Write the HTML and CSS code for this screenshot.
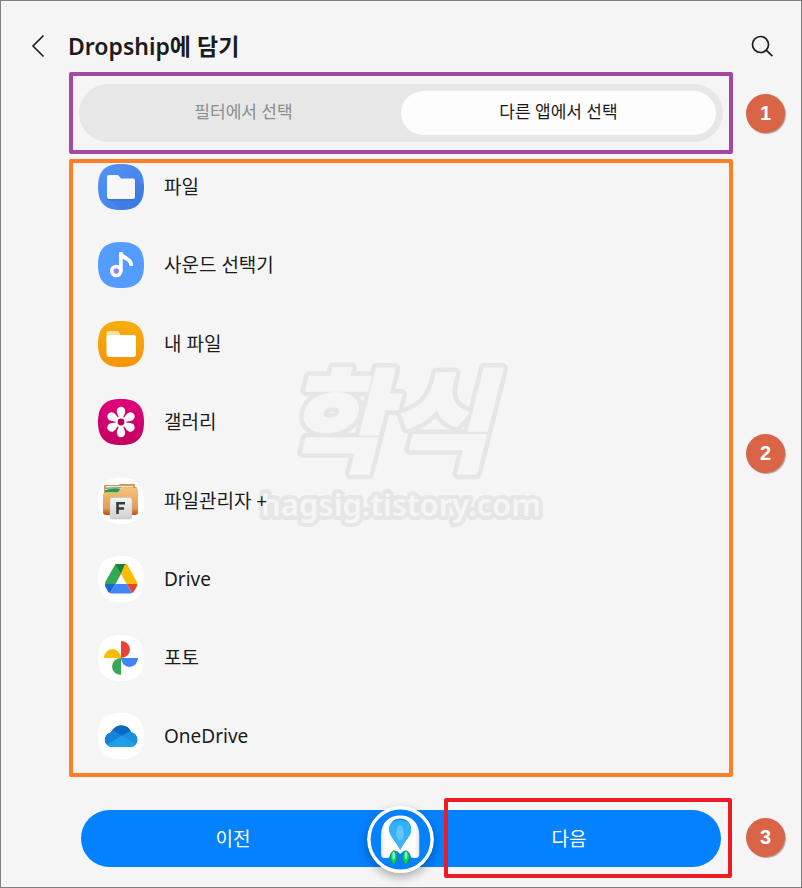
FILE: index.html
```html
<!DOCTYPE html>
<html lang="ko">
<head>
<meta charset="utf-8">
<meta name="viewport" content="width=device-width, initial-scale=1">
<title>Dropship에 담기</title>
<link rel="stylesheet" href="styles.css">
</head>
<body>
<div class="page">
  <header class="header">
    <button class="icon-button" type="button" aria-label="뒤로">
      <svg width="24" height="24" viewBox="0 0 24 24" fill="none" stroke="#1b1b1b" stroke-width="1.6"><path d="M18.500 1.500 8 12l10.500 10.500"/></svg>
    </button>
    <h1 class="title">Dropship에 담기</h1>
    <button class="icon-button search" type="button" aria-label="검색">
      <svg width="24" height="24" viewBox="0 0 24 24" fill="none" stroke="#1b1b1b" stroke-width="1.7"><circle cx="10.500" cy="10.500" r="8"/><path d="m16.200 16.200 6.200 6"/></svg>
    </button>
  </header>

  <main class="content">
    <section class="frame frame-tabs">
      <div class="tabs" role="tablist">
        <button class="tab" type="button" role="tab" aria-selected="false">필터에서 선택</button>
        <button class="tab tab-active" type="button" role="tab" aria-selected="true">다른 앱에서 선택</button>
      </div>
    </section>
    <span class="badge">1</span>

    <section class="frame frame-apps">
      <svg class="watermark" viewBox="0 0 300 180" aria-hidden="true">
        <defs>
          <text id="mark-name" class="watermark-name" x="136" y="110">학식</text>
        </defs>
        <use class="mark-outline" href="#mark-name"/>
        <use class="mark-body" href="#mark-name"/>
        <text class="watermark-site" x="150" y="163">hagsig.tistory.com</text>
      </svg>
      <ul class="apps">
        <li><a class="app" href="#files">
          <svg class="app-icon" viewBox="0 0 46 46">
            <defs><linearGradient id="files" x2="1" y2="1"><stop offset="0" stop-color="#5494f6"/><stop offset="1" stop-color="#3f7fe6"/></linearGradient></defs>
            <path fill="url(#files)" d="M23 0C39 0 46 7 46 23S39 46 23 46 0 39 0 23 7 0 23 0Z"/>
            <path fill="#3870cf" opacity=".3" d="m36 14 9.500 8C46 35 42 45 24 46L10 35h26Z"/>
            <path fill="#2f63b8" opacity=".4" d="M9 15h28.500v19q0 2.500-2.500 2.500H11.500Q9 36.500 9 34Z"/>
            <path fill="#f7f7f7" d="M11 11h9l3 3.500h12q2 0 2 2V33q0 2-2 2H11q-2 0-2-2V13q0-2 2-2Z"/>
          </svg>
          <span>파일</span></a></li>
        <li><a class="app" href="#sound">
          <svg class="app-icon" viewBox="0 0 46 46">
            <path fill="#549cff" d="M23 0C39 0 46 7 46 23S39 46 23 46 0 39 0 23 7 0 23 0Z"/>
            <circle cx="18.300" cy="29" r="4.500" fill="#9784f4" stroke="#fff" stroke-width="3.600"/>
            <path fill="#fff" d="M21 11q0-1 1-1h2.500c1 5 10.500 5 10.500 13q0 1-1 1h-1.800q-.8 0-.9-1c-.3-3-3.300-5-6.600-6v12H21Z"/>
          </svg>
          <span>사운드 선택기</span></a></li>
        <li><a class="app" href="#my-files">
          <svg class="app-icon" viewBox="0 0 46 46">
            <defs><linearGradient id="mine" x2="0" y2="1"><stop offset="0" stop-color="#f7ae0c"/><stop offset="1" stop-color="#f49409"/></linearGradient></defs>
            <path fill="url(#mine)" d="M23 0C39 0 46 7 46 23S39 46 23 46 0 39 0 23 7 0 23 0Z"/>
            <path fill="#fddf9f" d="M11 10h8q2 0 2.500 2l.5 2h14q2 0 2 2v5H8.500v-9q0-2 2.500-2Z"/>
            <rect x="8.500" y="14" width="29.500" height="22" rx="3" fill="#fff"/>
          </svg>
          <span>내 파일</span></a></li>
        <li><a class="app" href="#gallery">
          <svg class="app-icon" viewBox="0 0 46 46">
            <defs>
              <linearGradient id="gallery" x2="0" y2="1"><stop offset="0" stop-color="#df007c"/><stop offset="1" stop-color="#c30062"/></linearGradient>
              <path id="petal" d="M23 23C21 18 18.800 15 18.800 12a4.200 4.200 0 0 1 8.400 0C27.200 15 25 18 23 23Z"/>
            </defs>
            <path fill="url(#gallery)" d="M23 0C39 0 46 7 46 23S39 46 23 46 0 39 0 23 7 0 23 0Z"/>
            <g fill="#fff">
              <use href="#petal"/><use href="#petal" transform="rotate(60 23 23)"/><use href="#petal" transform="rotate(120 23 23)"/>
              <use href="#petal" transform="rotate(180 23 23)"/><use href="#petal" transform="rotate(240 23 23)"/><use href="#petal" transform="rotate(300 23 23)"/>
              <circle cx="23" cy="23" r="5.500"/>
            </g>
            <circle cx="23" cy="23" r="3.400" fill="#b8005c"/>
          </svg>
          <span>갤러리</span></a></li>
        <li><a class="app" href="#file-manager">
          <svg class="app-icon" viewBox="0 0 46 46">
            <defs>
              <linearGradient id="folder" x2="0" y2="1"><stop offset="0" stop-color="#f5c37e"/><stop offset=".75" stop-color="#df9d51"/><stop offset=".9" stop-color="#c96825"/><stop offset="1" stop-color="#b95317"/></linearGradient>
              <linearGradient id="card" x2="0" y2="1"><stop offset="0" stop-color="#f4f4f4"/><stop offset="1" stop-color="#cfcfcf"/></linearGradient>
            </defs>
            <path fill="#fff" d="M23 0C39 0 46 7 46 23S39 46 23 46 0 39 0 23 7 0 23 0Z"/>
            <path fill="#d09a5c" d="M6 8q0-1 1-1h13l2-1h14q1 0 1 1v2h1q1 0 1 1v20H6Z"/>
            <path fill="#f4e6ce" d="M8 8h27v1.500H8Z"/>
            <path fill="#6ba5cb" d="m7 10 16-1v7H7Z"/><path fill="#fff" d="m7 11 17-1v6H7Z"/><path fill="#2f9a4b" d="M7 12q9-3 17-1l-5 4H7Z"/><path fill="#a8cf58" d="M7 14h12l-3 2H7Z"/>
            <path fill="url(#folder)" d="M5 17q0-2 2-2h10c5 0 4-5 8-5h13q2 0 2 2v22q0 3-3 3H8q-3 0-3-3Z"/>
            <rect x="12" y="19.500" width="22" height="21.500" rx="2.500" fill="url(#card)" stroke="#bcbcbc" stroke-width=".5"/>
            <path fill="none" stroke="#353941" stroke-width="2.600" d="M19.500 36V25.300H27M19.500 30.500h6.500"/>
          </svg>
          <span>파일관리자 +</span></a></li>
        <li><a class="app" href="#drive">
          <svg class="app-icon" viewBox="0 0 46 46">
            <path fill="#fff" d="M23 0C39 0 46 7 46 23S39 46 23 46 0 39 0 23 7 0 23 0Z"/>
            <path fill="#34a853" d="M17.500 8 7.500 25.500Q7 26.500 7 28h10.500L23 18Z"/>
            <path fill="#188038" d="M17.500 8h11L23 18 17.300 8.500Z"/>
            <path fill="#fbbc04" d="M28.500 8q-1.500 0-2.300 1.500L23 18l5.700 10H39.300q0-1.500-.8-2.700L29.500 9Q29 8 28.500 8Z"/>
            <path fill="#1967d2" d="M7 28h10.500L12 37q-1.200-.5-2-1.500L7.500 31Q7 30 7 28Z"/>
            <path fill="#4285f4" d="M17.500 28h11.200L34 37q-1 .5-2 .5H14q-1 0-2-.5Z"/>
            <path fill="#ea4335" d="M28.700 28h10.600q0 2-1 3.500L36 35.500q-.8 1.200-2 1.500Z"/>
          </svg>
          <span>Drive</span></a></li>
        <li><a class="app" href="#photos">
          <svg class="app-icon" viewBox="0 0 46 46">
            <path fill="#fff" d="M23 0C39 0 46 7 46 23S39 46 23 46 0 39 0 23 7 0 23 0Z"/>
            <path fill="#ea4335" d="M23 6a9 8.500 0 0 1 0 17Z"/>
            <path fill="#4285f4" d="M40 23a8.500 9 0 0 1-17 0Z"/>
            <path fill="#34a853" d="M23 40a9 8.500 0 0 1 0-17Z"/>
            <path fill="#fbbc04" d="M6 23a8.500 9 0 0 1 17 0Z"/>
          </svg>
          <span>포토</span></a></li>
        <li><a class="app" href="#onedrive">
          <svg class="app-icon" viewBox="0 0 46 46">
            <defs><clipPath id="cloud"><path d="M14 34a7.300 7.300 0 0 1-1-14.500C15 15 19 12.300 23.500 12.300c5 0 8.500 3 9.800 7.200C37 20 39.300 23 39.300 26.500c0 4-3 7.500-7 7.500Z"/></clipPath></defs>
            <path fill="#fff" d="M23 0C39 0 46 7 46 23S39 46 23 46 0 39 0 23 7 0 23 0Z"/>
            <g clip-path="url(#cloud)">
              <path fill="#0a68be" d="M5 10h36v26H5Z"/>
              <path fill="#1681d8" d="m5 17 11 1 9 5-18 9H5Z"/>
              <path fill="#1a8ee0" d="m24 22.500 9-5 8 2v15Z"/>
              <path fill="#219fe6" d="m8 32 16-9.500L39 32v3H8Z"/>
            </g>
          </svg>
          <span>OneDrive</span></a></li>
      </ul>
    </section>
    <span class="badge badge-raised">2</span>

    <footer class="actions">
      <button class="action action-prev" type="button">이전</button>
      <button class="action action-next" type="button">다음</button>
      <svg class="ship" viewBox="0 0 67 67" aria-hidden="true">
        <defs>
          <linearGradient id="hull"><stop offset="0" stop-color="#e3e3e3"/><stop offset=".12" stop-color="#fff"/><stop offset=".88" stop-color="#fff"/><stop offset="1" stop-color="#e3e3e3"/></linearGradient>
          <linearGradient id="drop" x2="0" y2="1"><stop offset="0" stop-color="#2bb0fb"/><stop offset="1" stop-color="#40b6fc"/></linearGradient>
        </defs>
        <circle cx="33.500" cy="33.500" r="31.700" fill="#0381fe" stroke="#fff" stroke-width="3.600"/>
        <path fill="url(#hull)" d="M14 29C14 17 22 9.500 33.200 9.500S52.300 17 52.300 29v19q0 4-3.500 4H46q-2 0-2.500-2.500c-1-4.500-5-6-7.500-4L33.200 48l-2.700-2.500c-2.500-2-6.500-.5-7.500 4Q22.500 52 20.500 52h-3q-3.500 0-3.500-4Z"/>
        <path fill="#2687ce" d="M33.200 12.500c6.500 0 11 5 11 10.500 0 7-6 11-11 21-5-10-11-14-11-21 0-5.500 4.500-10.500 11-10.500Z"/>
        <path fill="url(#drop)" d="M33.200 14c6.500 0 11 4 11 9.500 0 7-6 10.500-11 20-5-9.500-11-13-11-20 0-5.500 4.500-9.500 11-9.500Z"/>
        <ellipse cx="33" cy="27" rx="3.800" ry="7.500" fill="#65c5fc"/>
        <g fill="#08db39" stroke="#119447" stroke-width=".7">
          <path d="M26.700 44.500c5 4 4 9 0 14-4-5-5-10 0-14Z"/><path d="M39 44.500c5 4 4 9 0 14-4-5-5-10 0-14Z"/>
        </g>
        <g fill="#85f8f0"><ellipse cx="26.700" cy="49.500" rx="1.300" ry="4"/><ellipse cx="39" cy="49.500" rx="1.300" ry="4"/></g>
      </svg>
    </footer>
    <span class="badge badge-lowered">3</span>
  </main>
</div>
</body>
</html>
```
FILE: styles.css
```css
* {
  box-sizing: border-box;
}

body {
  margin: 0;
  background: #f5f5f5;
  color: #1b1b1b;
  font-family: "Noto Sans", "Noto Sans CJK KR", sans-serif;
}

button {
  border: 0;
  padding: 0;
  background: none;
  color: inherit;
  font: inherit;
  cursor: pointer;
}

.page {
  display: flex;
  flex-direction: column;
  min-height: 100vh;
  border: 1px solid #808080;
}

.header {
  display: flex;
  align-items: center;
  height: 71px;
  padding: 18px 27px 0 24px;
}

.icon-button {
  display: flex;
  width: 24px;
  height: 24px;
}

.title {
  margin: 0 0 0 19px;
  font-size: 23px;
  font-weight: 600;
  line-height: 32px;
}

.search {
  margin-left: auto;
}

.content {
  flex: 1;
  display: grid;
  grid-template-columns: 1fr 39px;
  grid-template-rows: auto 1fr auto;
  column-gap: 13px;
  row-gap: 5px;
  padding: 0 16px 9px 68px;
}

.frame {
  border: 4px solid;
  border-radius: 2px;
}

.frame-tabs {
  border-color: #a349a4;
  padding: 8px 6px;
}

.tabs {
  display: flex;
  padding: 7px;
  border-radius: 29px;
  background: #e7e7e7;
}

.tab {
  flex: 1;
  height: 44px;
  padding-bottom: 3px;
  border-radius: 22px;
  color: #8c8c8c;
  font-size: 17px;
  line-height: 24px;
}

.tab-active {
  background: #fdfdfd;
  color: #1b1b1b;
}

.frame-apps {
  position: relative;
  display: flex;
  border-color: #ff7f27;
  padding: 1px 25px 14px;
}

.apps {
  position: relative;
  flex: 1;
  display: flex;
  flex-direction: column;
  justify-content: space-between;
  gap: 32px;
  margin: 0;
  padding: 0;
  list-style: none;
}

.app {
  display: flex;
  align-items: center;
  gap: 20px;
  color: inherit;
  font-size: 19px;
  line-height: 28px;
  text-decoration: none;
}

.app-icon {
  flex: none;
  width: 46px;
  height: 46px;
}

.watermark {
  position: absolute;
  top: 190px;
  left: calc(50% - 150px);
  width: 300px;
  height: 180px;
  overflow: visible;
  fill: #f5f5f5;
  text-anchor: middle;
  pointer-events: none;
}

.watermark-name {
  font-family: "Noto Sans CJK KR", sans-serif;
  font-size: 112px;
  font-style: italic;
  font-weight: 900;
  stroke-linejoin: round;
}

.mark-outline {
  fill: #e6e6e6;
  stroke: #e6e6e6;
  stroke-width: 11px;
}

.mark-body {
  stroke: #f5f5f5;
  stroke-width: 2px;
}

.watermark-site {
  font-size: 31px;
  font-weight: 600;
  stroke: #e6e6e6;
  stroke-width: 8px;
  stroke-linejoin: round;
  paint-order: stroke fill;
}

.badge {
  align-self: center;
  width: 39px;
  height: 39px;
  border-radius: 50%;
  background: #d96446;
  box-shadow: 1px 1px 1px #a8a8a8;
  color: #fff;
  font: bold 20px/38px "Liberation Sans", sans-serif;
  text-align: center;
}

.badge-raised {
  margin-bottom: 30px;
}

.badge-lowered {
  margin-top: 14px;
}

.actions {
  position: relative;
  display: flex;
  margin-top: 16px;
  padding: 12px 12px 11px;
}

.action {
  flex: 1;
  height: 57px;
  background: #0381fe;
  color: #fff;
  font-size: 19px;
  line-height: 28px;
}

.action-prev {
  border-radius: 29px 0 0 29px;
  padding-right: 16px;
}

.action-next {
  position: relative;
  border-radius: 0 29px 29px 0;
  padding-left: 16px;
}

.action-next::after {
  content: "";
  position: absolute;
  inset: -12px -11px -11px 43px;
  border: 4px solid #ed1c24;
  border-radius: 2px;
}

.ship {
  position: absolute;
  top: 8px;
  left: calc(50% - 34px);
  width: 67px;
  height: 67px;
  border-radius: 50%;
  box-shadow: 0 4px 10px rgba(0, 0, 0, 0.3);
}
```
